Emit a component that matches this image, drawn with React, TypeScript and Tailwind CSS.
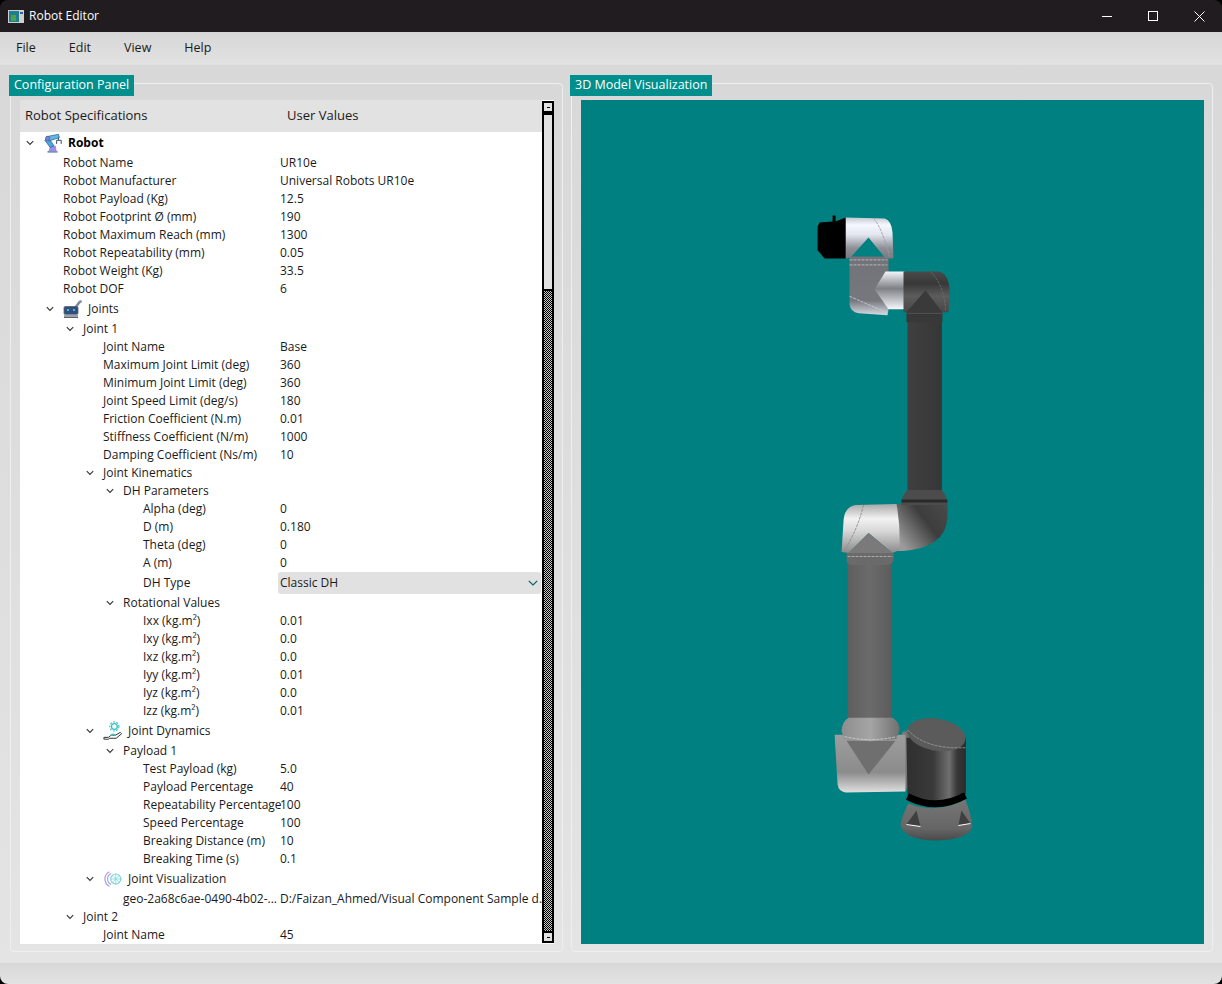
import React from "react";

type Row = {
  label: string;
  value?: string;
  depth: number;
  open?: boolean;
  icon?: React.ReactNode;
  bold?: boolean;
  combo?: boolean;
  h: string;
};

const Chevron = () => (
  <svg width="8" height="6" viewBox="0 0 8 6" fill="none" className="text-[#333]">
    <path d="M0.8 1.2 L4 4.4 L7.2 1.2" stroke="currentColor" strokeWidth="1.1" />
  </svg>
);

const RobotIcon = () => (
  <svg width="22" height="22" viewBox="0 0 22 22">
    <path d="M5 20 h11 v1.5 h-11z" fill="#2f6f9f" />
    <path d="M8 14 l6 0 l1 6 h-9z" fill="#a58be0" />
    <path d="M2 8 L8 16 L12 14 L6 5z" fill="#4aa8dc" stroke="#23608c" strokeWidth="0.8" />
    <path d="M4 4 L17 1.5 L18 5 L6 9z" fill="#62b8e4" stroke="#23608c" strokeWidth="0.8" />
    <circle cx="5" cy="6" r="2.4" fill="#8c78d8" stroke="#23608c" strokeWidth="0.6" />
    <path d="M17 5 v3 M15 8 h5 M15 8 v4 M20 8 v4" stroke="#3b4a6b" strokeWidth="1.1" fill="none" />
  </svg>
);

const JointsIcon = () => (
  <svg width="20" height="20" viewBox="0 0 20 20">
    <path d="M12 9 L17 2.5" stroke="#7c8b99" strokeWidth="2.6" />
    <circle cx="17.5" cy="2.5" r="1.5" fill="#8d99a5" />
    <rect x="1" y="7.5" width="14" height="8" rx="1.4" fill="#2f4f7f" stroke="#55606c" strokeWidth="0.8" />
    <circle cx="5" cy="11" r="1.1" fill="#63c9e8" />
    <circle cx="11" cy="11" r="1.1" fill="#63c9e8" />
    <rect x="1" y="15.5" width="14" height="3" fill="#9aa3ad" />
    <path d="M1 18.5 h14" stroke="#444" strokeWidth="0.8" />
  </svg>
);

const DynamicsIcon = () => (
  <svg width="22" height="22" viewBox="0 0 22 22" fill="none">
    <circle cx="12.5" cy="6" r="3.2" stroke="#35bfc4" strokeWidth="1.4" />
    <circle cx="12.5" cy="6" r="5" stroke="#35bfc4" strokeWidth="1.2" strokeDasharray="2 1.6" />
    <path d="M1 18 h5 l3 -2.5 h5 l5 -3 l1.5 1.5 l-6 5 h-7 l-1.5 1 h-5z" fill="#fff" stroke="#222" strokeWidth="1" />
    <path d="M8 16 l3 -1.5 l3 1" stroke="#35bfc4" strokeWidth="1.2" />
  </svg>
);

const VisualIcon = () => (
  <svg width="22" height="22" viewBox="0 0 22 22" fill="none">
    <path d="M7 3 A9 9 0 0 0 7 19" stroke="#a99be6" strokeWidth="1.3" />
    <path d="M9 5 A6.5 6.5 0 0 0 9 17" stroke="#a99be6" strokeWidth="1.2" />
    <circle cx="14" cy="11" r="5.5" stroke="#80d8dc" strokeWidth="1.3" />
    <path d="M8 11 h13 M14 5 v12 M10 7 l8 8 M18 7 l-8 8" stroke="#80d8dc" strokeWidth="0.9" />
  </svg>
);

const rows: Row[] = [
  { label: "Robot", depth: 0, open: true, icon: <RobotIcon />, bold: true, h: "h-[25px]" },
  { label: "Robot Name", value: "UR10e", depth: 1, h: "h-[18px]" },
  { label: "Robot Manufacturer", value: "Universal Robots UR10e", depth: 1, h: "h-[18px]" },
  { label: "Robot Payload (Kg)", value: "12.5", depth: 1, h: "h-[18px]" },
  { label: "Robot Footprint Ø (mm)", value: "190", depth: 1, h: "h-[18px]" },
  { label: "Robot Maximum Reach (mm)", value: "1300", depth: 1, h: "h-[18px]" },
  { label: "Robot Repeatability (mm)", value: "0.05", depth: 1, h: "h-[18px]" },
  { label: "Robot Weight (Kg)", value: "33.5", depth: 1, h: "h-[18px]" },
  { label: "Robot DOF", value: "6", depth: 1, h: "h-[18px]" },
  { label: "Joints", depth: 1, open: true, icon: <JointsIcon />, h: "h-[24px]" },
  { label: "Joint 1", depth: 2, open: true, h: "h-[18px]" },
  { label: "Joint Name", value: "Base", depth: 3, h: "h-[18px]" },
  { label: "Maximum Joint Limit (deg)", value: "360", depth: 3, h: "h-[18px]" },
  { label: "Minimum Joint Limit (deg)", value: "360", depth: 3, h: "h-[18px]" },
  { label: "Joint Speed Limit (deg/s)", value: "180", depth: 3, h: "h-[18px]" },
  { label: "Friction Coefficient (N.m)", value: "0.01", depth: 3, h: "h-[18px]" },
  { label: "Stiffness Coefficient (N/m)", value: "1000", depth: 3, h: "h-[18px]" },
  { label: "Damping Coefficient (Ns/m)", value: "10", depth: 3, h: "h-[18px]" },
  { label: "Joint Kinematics", depth: 3, open: true, h: "h-[18px]" },
  { label: "DH Parameters", depth: 4, open: true, h: "h-[19px]" },
  { label: "Alpha (deg)", value: "0", depth: 5, h: "h-[18px]" },
  { label: "D (m)", value: "0.180", depth: 5, h: "h-[18px]" },
  { label: "Theta (deg)", value: "0", depth: 5, h: "h-[18px]" },
  { label: "A (m)", value: "0", depth: 5, h: "h-[18px]" },
  { label: "DH Type", value: "Classic DH", depth: 5, combo: true, h: "h-[23px]" },
  { label: "Rotational Values", depth: 4, open: true, h: "h-[19px]" },
  { label: "Ixx (kg.m²)", value: "0.01", depth: 5, h: "h-[18px]" },
  { label: "Ixy (kg.m²)", value: "0.0", depth: 5, h: "h-[18px]" },
  { label: "Ixz (kg.m²)", value: "0.0", depth: 5, h: "h-[18px]" },
  { label: "Iyy (kg.m²)", value: "0.01", depth: 5, h: "h-[18px]" },
  { label: "Iyz (kg.m²)", value: "0.0", depth: 5, h: "h-[18px]" },
  { label: "Izz (kg.m²)", value: "0.01", depth: 5, h: "h-[18px]" },
  { label: "Joint Dynamics", depth: 3, open: true, icon: <DynamicsIcon />, h: "h-[24px]" },
  { label: "Payload 1", depth: 4, open: true, h: "h-[18px]" },
  { label: "Test Payload (kg)", value: "5.0", depth: 5, h: "h-[18px]" },
  { label: "Payload Percentage", value: "40", depth: 5, h: "h-[18px]" },
  { label: "Repeatability Percentage", value: "100", depth: 5, h: "h-[18px]" },
  { label: "Speed Percentage", value: "100", depth: 5, h: "h-[18px]" },
  { label: "Breaking Distance (m)", value: "10", depth: 5, h: "h-[18px]" },
  { label: "Breaking Time (s)", value: "0.1", depth: 5, h: "h-[18px]" },
  { label: "Joint Visualization", depth: 3, open: true, icon: <VisualIcon />, h: "h-[24px]" },
  { label: "geo-2a68c6ae-0490-4b02-...", value: "D:/Faizan_Ahmed/Visual Component Sample d...", depth: 4, h: "h-[18px]" },
  { label: "Joint 2", depth: 2, open: true, h: "h-[18px]" },
  { label: "Joint Name", value: "45", depth: 3, h: "h-[18px]" },
];

const TreeRow = ({ row }: { row: Row }) => (
  <div className={`grid grid-cols-[260px_1fr] items-center whitespace-nowrap ${row.h}`}>
    <div className="flex items-center" style={{ paddingLeft: row.depth * 20 }}>
      <span className="flex w-5 shrink-0 justify-center">{row.open && <Chevron />}</span>
      <div className="flex items-center pl-[3px]">
        {row.icon && <span className="mr-[5px] flex w-5 justify-center">{row.icon}</span>}
        <span className={row.bold ? "font-bold text-black" : ""}>{row.label}</span>
      </div>
    </div>
    {row.combo ? (
      <div className="ml-[-2px] mr-px flex h-[22px] items-center justify-between rounded-[3px] bg-[#e1e1e1] pl-[2px] pr-[3px]">
        <span>{row.value}</span>
        <svg width="10" height="6" viewBox="0 0 10 6" fill="none">
          <path d="M0.8 0.8 L5 5 L9.2 0.8" stroke="#00605f" strokeWidth="1.2" />
        </svg>
      </div>
    ) : (
      <span>{row.value}</span>
    )}
  </div>
);

const ScrollButton = () => (
  <div className="flex h-3 shrink-0 items-center justify-center border-2 border-black bg-[#e1e1e1]">
    <span className="h-px w-[3px] bg-black" />
  </div>
);

const GroupBox = ({ title, children }: { title: string; children: React.ReactNode }) => (
  <section className="relative flex min-h-0 flex-col rounded-[4px] border border-[#efefef] pb-[7px] pl-[9px] pr-[8px] pt-4">
    <div className="absolute left-[-2px] top-[-9px] flex h-[21px] items-center bg-[#008f8c] px-[5px] text-[12.5px] text-white">
      {title}
    </div>
    {children}
  </section>
);

const RobotModel = () => (
  <svg viewBox="580 100 624 844" className="block h-full w-full">
    <defs>
      <linearGradient id="w3" x1="0" y1="0" x2="0" y2="1">
        <stop offset="0" stopColor="#c4c7cf" />
        <stop offset="0.18" stopColor="#f6f8ff" />
        <stop offset="0.42" stopColor="#e3e6ee" />
        <stop offset="0.75" stopColor="#8c8f96" />
        <stop offset="1" stopColor="#777a80" />
      </linearGradient>
      <linearGradient id="w2" x1="0" y1="0" x2="0" y2="1">
        <stop offset="0" stopColor="#f4f6fc" />
        <stop offset="0.45" stopColor="#7e8086" />
        <stop offset="1" stopColor="#f7f9ff" />
      </linearGradient>
      <linearGradient id="wbody" x1="0" y1="0" x2="0" y2="1">
        <stop offset="0" stopColor="#717379" />
        <stop offset="0.75" stopColor="#76787e" />
        <stop offset="1" stopColor="#d9dce4" />
      </linearGradient>
      <linearGradient id="delbow" x1="0" y1="0" x2="0" y2="1">
        <stop offset="0" stopColor="#4a4a4a" />
        <stop offset="0.3" stopColor="#383838" />
        <stop offset="0.6" stopColor="#5c5c5c" />
        <stop offset="1" stopColor="#474747" />
      </linearGradient>
      <linearGradient id="armD" x1="0" y1="0" x2="1" y2="0">
        <stop offset="0" stopColor="#3f3f3f" />
        <stop offset="1" stopColor="#373737" />
      </linearGradient>
      <linearGradient id="armL" x1="0" y1="0" x2="1" y2="0">
        <stop offset="0" stopColor="#5e5e5e" />
        <stop offset="0.5" stopColor="#6b6b6b" />
        <stop offset="1" stopColor="#5c5c5c" />
      </linearGradient>
      <linearGradient id="elbow" x1="1" y1="0" x2="0" y2="0.7">
        <stop offset="0" stopColor="#4a4a4a" />
        <stop offset="0.45" stopColor="#3d3d3d" />
        <stop offset="1" stopColor="#9a9a9a" />
      </linearGradient>
      <linearGradient id="white2" x1="0" y1="0" x2="0" y2="1">
        <stop offset="0" stopColor="#a8a8a8" />
        <stop offset="0.3" stopColor="#f2f2f2" />
        <stop offset="0.55" stopColor="#d8d8d8" />
        <stop offset="1" stopColor="#8a8a8a" />
      </linearGradient>
      <linearGradient id="coll" x1="0" y1="0" x2="1" y2="0">
        <stop offset="0" stopColor="#8d8d8d" />
        <stop offset="0.5" stopColor="#a5a5a5" />
        <stop offset="1" stopColor="#707070" />
      </linearGradient>
      <linearGradient id="box" x1="0" y1="0" x2="0" y2="1">
        <stop offset="0" stopColor="#9d9d9d" />
        <stop offset="0.65" stopColor="#8c8c8c" />
        <stop offset="1" stopColor="#e0e0e0" />
      </linearGradient>
      <linearGradient id="link" x1="0" y1="0" x2="1" y2="0">
        <stop offset="0" stopColor="#808080" />
        <stop offset="1" stopColor="#333333" />
      </linearGradient>
      <linearGradient id="base" x1="0" y1="0" x2="1" y2="0">
        <stop offset="0" stopColor="#2f2f2f" />
        <stop offset="0.45" stopColor="#3a3a3a" />
        <stop offset="0.72" stopColor="#6f6f6f" />
        <stop offset="0.85" stopColor="#383838" />
        <stop offset="1" stopColor="#2b2b2b" />
      </linearGradient>
      <linearGradient id="flange" x1="0" y1="0" x2="0" y2="1">
        <stop offset="0" stopColor="#767676" />
        <stop offset="0.7" stopColor="#666666" />
        <stop offset="1" stopColor="#4a4a4a" />
      </linearGradient>
    </defs>

    {/* upper arm */}
    <rect x="907" y="310" width="34.5" height="185" fill="url(#armD)" />
    <path d="M906 310 H942 V322 H906Z" fill="#383838" />
    <path d="M906 313 H942" stroke="#5a5a5a" strokeWidth="0.8" />

    {/* wrist 2 */}
    <path d="M849 256 H888 V309 L887 315 L858 313 Q850 312 849 304Z" fill="url(#wbody)" />
    <path d="M849 259.5 H887 M849 264.5 H887" stroke="#c4c6cc" strokeWidth="0.8" strokeDasharray="3 1" />
    <path d="M849 296 L886 312" stroke="#c9cbd2" strokeWidth="0.9" strokeDasharray="3 1" />
    <path d="M885 271 H904 V309 H888 L874 289Z" fill="url(#w2)" />
    <path d="M903 271 H938 Q949 273 949.5 293 L948 312 H903Z" fill="url(#delbow)" />
    <path d="M906 312 L925 290 L942 312Z" fill="#3a3a3a" />
    <path d="M930 271 Q944 285 945 310" stroke="#6f6f6f" strokeWidth="0.8" fill="none" strokeDasharray="3 1" />

    {/* tool end */}
    <path d="M845 217 L884 218 Q891 220 892 232 L893 258 L885 258 L868 237 L850 257 L845 258Z" fill="url(#w3)" />
    <path d="M873 218 Q881 226 889 256" stroke="#9a9da5" strokeWidth="0.9" fill="none" strokeDasharray="3 1" />
    <path d="M819 222 L832 221 V215 H835 V221 L845 217 V258 L824 258 L819 252 L817 250 V226Z" fill="#000" />

    {/* elbow */}
    <path d="M896 504 H947 V518 Q945 548 902 551 L897 551Z" fill="url(#elbow)" />
    <path d="M907 490 Q901 496 901 505 H947 Q947 496 941 490Z" fill="#4c4c4c" />
    <path d="M901 501 H947" stroke="#2a2a2a" strokeWidth="3" />
    <path d="M855 505 L896 504 Q900 525 899 550 L892 553 L868 533 L848 553 L841 552 Q842 535 843 520 Q844 507 855 505Z" fill="url(#white2)" />
    <path d="M863 505 Q857 530 843 552" stroke="#8a8a8a" strokeWidth="0.9" fill="none" strokeDasharray="3 1" />
    <path d="M848 553 L868 533 L892 553Z" fill="#7a7a7a" />

    {/* lower arm */}
    <rect x="847" y="560" width="44" height="165" fill="url(#armL)" />
    <path d="M846 553 H893 V560 Q892 564 888 565 H850 Q846 564 846 560Z" fill="#6a6a6a" />
    <path d="M847 556.5 H892" stroke="#bdbdbd" strokeWidth="0.8" strokeDasharray="3 1" />

    {/* shoulder */}
    <path d="M902 732 Q894 760 906 790 L925 793 L945 760 L925 728Z" fill="url(#link)" />
    <path d="M834 735 L905 735 V792 L845 793 Q838 792 837 785Z" fill="url(#box)" />
    <path d="M846 741 L868 775 L895 741Z" fill="#6f6f6f" />
    <path d="M848 718 Q841 722 841 732 L844 739 Q870 744 896 739 L899 730 Q899 722 892 718Z" fill="url(#coll)" />
    <path d="M844 737 Q870 743 896 737" stroke="#d5d5d5" strokeWidth="0.8" fill="none" strokeDasharray="3 1" />

    {/* base */}
    <path d="M906 738 H965.5 V795 Q936 812 907 797Z" fill="url(#base)" />
    <path d="M908 804 Q900 820 900 826 Q905 841 936 841 Q970 840 972 826 Q971 816 965 800 Q936 815 908 804Z" fill="url(#flange)" />
    <path d="M907 797 Q936 812 965 796" stroke="#000" strokeWidth="7" fill="none" />
    <path d="M916 811 L906 825 L920 827Z" fill="#3f3f3f" />
    <path d="M906 825 L920 827" stroke="#fff" strokeWidth="1" />
    <path d="M961 811 L958 826 L970 824Z" fill="#3f3f3f" />
    <path d="M958 826 L970 824" stroke="#fff" strokeWidth="1" />
    <ellipse cx="936" cy="735" rx="29.5" ry="16" transform="rotate(10 936 735)" fill="#5b5b5b" />
    <path d="M907 730 Q925 750 965 748" stroke="#a0a0a0" strokeWidth="0.8" fill="none" strokeDasharray="3 1" />
  </svg>
);

const menus = ["File", "Edit", "View", "Help"];

export default function App() {
  return (
    <div className="h-[984px] w-[1222px] overflow-hidden bg-black font-['Open_Sans','Noto_Sans',sans-serif]">
      <div className="flex h-full flex-col overflow-hidden rounded-lg text-[12px] text-[#1a1a1a]">
        {/* Title bar */}
        <header className="flex h-8 shrink-0 items-center justify-between bg-[#211c1f] text-white">
          <div className="flex items-center pl-2">
            <svg width="16" height="13" viewBox="0 0 16 13">
              <rect width="16" height="13" fill="#cfcfcf" />
              <rect x="1" y="1" width="10" height="11" fill="#1f7f8f" />
              <rect x="3" y="5" width="5" height="6" fill="#4aa34a" />
              <rect x="12" y="2" width="3" height="2" fill="#2f5fa8" />
            </svg>
            <span className="pl-[5px]">Robot Editor</span>
          </div>
          <div className="flex items-center">
            <span className="flex w-[46px] justify-center">
              <span className="h-px w-[10px] bg-white" />
            </span>
            <span className="flex w-[46px] justify-center">
              <span className="h-[10px] w-[10px] border border-white" />
            </span>
            <span className="flex w-[46px] justify-center">
              <svg width="11" height="11" viewBox="0 0 11 11" stroke="#fff" strokeWidth="1">
                <path d="M0.5 0.5 L10.5 10.5 M10.5 0.5 L0.5 10.5" />
              </svg>
            </span>
          </div>
        </header>

        {/* Menu bar */}
        <nav className="flex h-[33px] shrink-0 items-center gap-[33px] bg-gradient-to-b from-[#d7d7d7] to-[#e2e2e2] pl-4 text-[12.5px]">
          {menus.map((m) => (
            <span key={m}>{m}</span>
          ))}
        </nav>

        {/* Panels */}
        <main className="grid min-h-0 flex-1 grid-cols-[553px_642px] gap-2 bg-gradient-to-b from-[#d8d8d8] to-[#e4e4e4] pb-[11px] pl-[10px] pt-[18px]">
          <GroupBox title="Configuration Panel">
            <div className="flex min-h-0 flex-1 bg-white">
              <div className="flex min-w-0 flex-1 flex-col overflow-hidden">
                <div className="grid h-8 shrink-0 grid-cols-[262px_1fr] items-center bg-[#e2e2e2] pl-[5px] text-[13px]">
                  <span>Robot Specifications</span>
                  <span>User Values</span>
                </div>
                {rows.map((row, i) => (
                  <TreeRow key={i} row={row} />
                ))}
              </div>
              <div className="flex w-3 shrink-0 flex-col py-px">
                <ScrollButton />
                <div className="h-[178px] shrink-0 border-2 border-black bg-[#e1e1e1]" />
                <div className="flex-1 border-x-2 border-black bg-[repeating-conic-gradient(#000_0_25%,#c8c8c8_0_50%)] bg-[length:2px_2px]" />
                <ScrollButton />
              </div>
            </div>
          </GroupBox>
          <GroupBox title="3D Model Visualization">
            <div className="min-h-0 flex-1 bg-[#008080]">
              <RobotModel />
            </div>
          </GroupBox>
        </main>

        {/* Status bar */}
        <footer className="h-[21px] shrink-0 bg-gradient-to-b from-[#d8d8d8] to-[#e2e2e2]" />
      </div>
    </div>
  );
}
